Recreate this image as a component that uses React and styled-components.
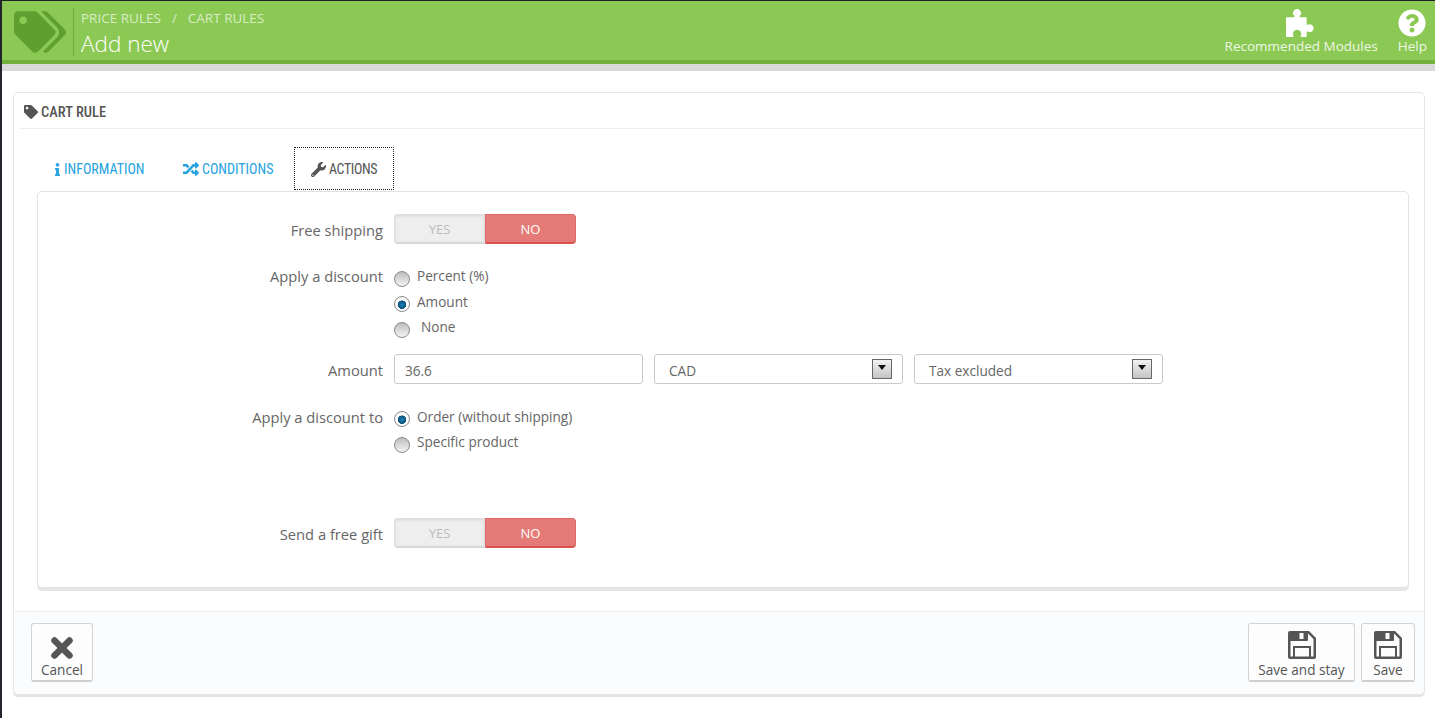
import styled, { createGlobalStyle } from 'styled-components';
import { FaTag, FaTags, FaInfo, FaRandom, FaWrench, FaQuestionCircle } from 'react-icons/fa';

const GlobalStyle = createGlobalStyle`
  html, body {
    margin: 0;
    padding: 0;
    background: #fff;
    font-family: "Open Sans", "Liberation Sans", sans-serif;
    font-size: 14px;
    color: #666;
  }
`;

const Shell = styled.div`
  display: flex;
  height: 718px;
  overflow: hidden;
`;

// restant de la barre latérale sombre
const SideStrip = styled.div`
  width: 2px;
  flex: none;
  background: #23252c;
`;

const Main = styled.div`
  flex: 1;
  min-width: 0;
  display: flex;
  flex-direction: column;
`;

const PageHead = styled.header`
  height: 59px;
  background: #8bc954;
  border-top: 1px solid #1c1e22;
  border-bottom: 4px solid #72b13c;
  box-shadow: 0 7px 0 #d9d9d9;
  display: flex;
  align-items: flex-start;
  justify-content: space-between;
  color: #fff;
`;

const HeadLeft = styled.div`
  display: flex;
  align-items: flex-start;
  padding: 7px 0 0 12px;
`;

const LogoBox = styled.div`
  width: 59px;
  height: 48px;
  border-right: 1px solid #6faa3d;
  display: flex;
  align-items: center;
  color: #5f9f30;
  font-size: 52px;
`;

const HeadTitles = styled.div`
  padding-left: 7px;
`;

const Crumbs = styled.div`
  display: flex;
  gap: 11px;
  font-size: 13.5px;
  line-height: 20px;
  color: #d8ecc6;
`;

const PageTitle = styled.h1`
  margin: 0;
  font-size: 22.5px;
  font-weight: 300;
  line-height: 32px;
  color: #fff;
`;

const HeadActions = styled.div`
  display: flex;
  gap: 20px;
  padding: 7px 8px 0 0;
`;

const HeadAction = styled.a`
  display: flex;
  flex-direction: column;
  align-items: center;
  font-size: 13.5px;
  line-height: 16px;
  color: #eef7e4;
`;

const HeadIcon = styled.span`
  height: 30px;
  display: flex;
  align-items: center;
  color: #fff;
  font-size: ${p => p.$size}px;
`;

const Panel = styled.section`
  margin: 28px 10px 0 11px;
  height: 603px;
  box-sizing: border-box;
  border: 1px solid #e6e6e6;
  border-radius: 5px;
  box-shadow: 0 2px 0 #e4e4e4;
  display: flex;
  flex-direction: column;
`;

const PanelHead = styled.div`
  margin: 0 0 0 5px;
  height: 32px;
  padding: 3px 0 0 5px;
  border-bottom: 1px solid #eee;
  display: flex;
  align-items: center;
  gap: 3px;
  font-family: "Roboto", sans-serif;
  font-stretch: condensed;
  font-size: 14.5px;
  font-weight: 500;
  color: #555;
`;

const Tabs = styled.nav`
  display: flex;
  align-items: flex-start;
  padding: 18px 0 0 23px;
  height: 44px;
`;

const Tab = styled.a`
  box-sizing: border-box;
  width: ${p => p.$width}px;
  height: 43px;
  padding: 1px 0 0 ${p => p.$pad}px;
  display: flex;
  align-items: center;
  gap: ${p => p.$gap}px;
  font-family: "Roboto", sans-serif;
  font-stretch: condensed;
  font-size: 14px;
  letter-spacing: ${p => (p.$active ? '-0.4px' : '0')};
  color: ${p => (p.$active ? '#555' : '#25a2e0')};
  background: ${p => (p.$active ? '#fff' : 'transparent')};
  border: ${p => (p.$active ? '1px dotted #222' : '1px solid transparent')};
`;

const FormPanel = styled.div`
  margin: 0 15px 0 23px;
  height: 397px;
  box-sizing: border-box;
  border: 1px solid #e2e2e2;
  border-radius: 5px;
  box-shadow: 0 3px 0 #e6e6e6;
  padding-top: 22px;
`;

const Row = styled.div`
  display: flex;
  gap: 11px;
  margin-top: ${p => p.$top || 0}px;
`;

const Label = styled.label`
  width: 345px;
  flex: none;
  text-align: right;
  font-size: 14.7px;
  color: #666;
  line-height: ${p => p.$line || 32}px;
  height: ${p => p.$line || 30}px;
`;

const Switch = styled.div`
  width: 182px;
  height: 30px;
  display: flex;
  font-size: 13px;
`;

const SwitchSide = styled.span`
  flex: 1;
  box-sizing: border-box;
  padding-top: 1px;
  display: flex;
  align-items: center;
  justify-content: center;
  border-radius: ${p => (p.$on ? '0 4px 4px 0' : '4px 0 0 4px')};
  color: ${p => (p.$on ? '#fff' : '#bbb')};
  background: ${p => (p.$on ? '#e57b78' : '#eeeeee')};
  border: 1px solid ${p => (p.$on ? '#dd6763' : '#e0e0e0')};
  border-bottom: 2px solid ${p => (p.$on ? '#d9534f' : '#d8d8d8')};
  box-shadow: ${p => (p.$on ? 'none' : 'inset 0 1px 3px rgba(0, 0, 0, 0.1)')};
`;

const RadioList = styled.div`
  display: flex;
  flex-direction: column;
  margin-top: -1px;
`;

const RadioRow = styled.div`
  display: flex;
  align-items: center;
  gap: ${p => p.$gap || 7}px;
  height: 25.5px;
  font-size: 13.6px;
  color: #666;
`;

const RadioDot = styled.span`
  box-sizing: border-box;
  width: 16px;
  height: 16px;
  margin-top: 6px;
  border-radius: 50%;
  border: 1px solid #8a8a8a;
  background: ${p =>
    p.$checked
      ? 'radial-gradient(circle at 50% 55%, #1a86b8 0, #0a4f78 4px, #fff 4.5px, #f4f4f4 100%)'
      : 'linear-gradient(#bdbdbd, #f4f4f4)'};
`;

const Controls = styled.div`
  display: flex;
  gap: 11px;
`;

const TextField = styled.div`
  box-sizing: border-box;
  width: 249px;
  height: 30px;
  padding: 4px 0 0 10px;
  border: 1px solid #c9c9c9;
  border-radius: 3px;
  display: flex;
  align-items: center;
  font-size: 13.6px;
  color: #666;
`;

const SelectBox = styled(TextField)`
  padding: 0 10px 0 14px;
  justify-content: space-between;
`;

const SelectValue = styled.span`
  padding-top: 4px;
`;

const SelectArrow = styled.span`
  box-sizing: border-box;
  width: 20px;
  height: 20px;
  border: 1px solid #666;
  background: linear-gradient(#f2f2f2, #c4c4c4);
  display: flex;
  justify-content: center;
  padding-top: 5px;

  &::after {
    content: '';
    width: 0;
    height: 0;
    border-left: 4.5px solid transparent;
    border-right: 4.5px solid transparent;
    border-top: 5px solid #111;
  }
`;

const PanelFooter = styled.footer`
  margin-top: 23px;
  flex: 1;
  border-top: 1px solid #eee;
  background: #fbfcfe;
  border-radius: 0 0 5px 5px;
  padding: 11px 9px 0 17px;
  display: flex;
  justify-content: space-between;
`;

const FooterGroup = styled.div`
  display: flex;
  gap: 6px;
`;

const FooterButton = styled.button`
  box-sizing: border-box;
  width: ${p => p.$width}px;
  height: 59px;
  padding: 0;
  background: #fdfdfd;
  border: 1px solid #d4d4d4;
  border-bottom: 2px solid #cfcfcf;
  border-radius: 3px;
  display: flex;
  flex-direction: column;
  align-items: center;
  justify-content: flex-end;
  font-family: inherit;
  font-size: 13.6px;
  line-height: 20px;
  color: #555;
`;

const ButtonIcon = styled.svg`
  display: block;
  flex: none;
  margin-bottom: 1px;
`;

function PuzzleIcon() {
  return (
    <svg width="31" height="28" viewBox="0 0 30 27" fill="#fff">
      <path d="M0 8H7.5C8.5 8 8.5 7 8 6.5A3.8 3.8 0 1 1 13.4 6.5C13 7 13 8 14 8H20V14.5C20 15.5 21 15.5 21.5 15A3.8 3.8 0 1 1 21.5 22C21 21.5 20 21.5 20 22.5V27H15C14 27 14 26 14.5 25.5A4 4 0 1 0 7 25.5C7.4 26 7.4 27 6.5 27H0Z" />
    </svg>
  );
}

function CancelIcon() {
  return (
    <ButtonIcon width="22" height="22" viewBox="0 0 22 22">
      <path d="M3.5 3.5 L18.5 18.5 M18.5 3.5 L3.5 18.5" stroke="#555" strokeWidth="6.5" strokeLinecap="round" fill="none" />
    </ButtonIcon>
  );
}

function SaveIcon() {
  return (
    <ButtonIcon width="28" height="28" viewBox="0 0 28 28">
      <path
        fillRule="evenodd"
        fill="#555"
        d="M2 0H21L28 7V26a2 2 0 0 1-2 2H2a2 2 0 0 1-2-2V2a2 2 0 0 1 2-2zM2.5 10V25.5H5V15H23V25.5H25.5V8L20 2.5V9a1 1 0 0 1-1 1zM7 17V25.5H21V17zM11.5 2V8H15.5V2z"
      />
    </ButtonIcon>
  );
}

function YesNo() {
  return (
    <Switch>
      <SwitchSide>YES</SwitchSide>
      <SwitchSide $on>NO</SwitchSide>
    </Switch>
  );
}

function Radio({ checked, gap, children }) {
  return (
    <RadioRow $gap={gap}>
      <RadioDot $checked={checked} />
      {children}
    </RadioRow>
  );
}

function SelectField({ value }) {
  return (
    <SelectBox>
      <SelectValue>{value}</SelectValue>
      <SelectArrow />
    </SelectBox>
  );
}

export default function App() {
  return (
    <Shell>
      <GlobalStyle />
      <SideStrip />
      <Main>
        <PageHead>
          <HeadLeft>
            <LogoBox>
              <FaTags />
            </LogoBox>
            <HeadTitles>
              <Crumbs>
                <span>PRICE RULES</span>
                <span>/</span>
                <span>CART RULES</span>
              </Crumbs>
              <PageTitle>Add new</PageTitle>
            </HeadTitles>
          </HeadLeft>
          <HeadActions>
            <HeadAction>
              <HeadIcon $size={28}><PuzzleIcon /></HeadIcon>
              Recommended Modules
            </HeadAction>
            <HeadAction>
              <HeadIcon $size={28}><FaQuestionCircle /></HeadIcon>
              Help
            </HeadAction>
          </HeadActions>
        </PageHead>

        <Panel>
          <PanelHead>
            <FaTag size={14} />
            CART RULE
          </PanelHead>

          <Tabs>
            <Tab $width={123} $pad={13} $gap={0}>
              <FaInfo size={13} />
              INFORMATION
            </Tab>
            <Tab $width={134} $pad={22} $gap={3}>
              <FaRandom size={16} />
              CONDITIONS
            </Tab>
            <Tab $width={100} $pad={16} $gap={3} $active>
              <FaWrench size={15} />
              ACTIONS
            </Tab>
          </Tabs>

          <FormPanel>
            <Row>
              <Label>Free shipping</Label>
              <YesNo />
            </Row>
            <Row $top={20}>
              <Label $line={25}>Apply a discount</Label>
              <RadioList>
                <Radio>Percent (%)</Radio>
                <Radio checked>Amount</Radio>
                <Radio gap={11}>None</Radio>
              </RadioList>
            </Row>
            <Row $top={14}>
              <Label>Amount</Label>
              <Controls>
                <TextField>36.6</TextField>
                <SelectField value="CAD" />
                <SelectField value="Tax excluded" />
              </Controls>
            </Row>
            <Row $top={21}>
              <Label $line={25}>Apply a discount to</Label>
              <RadioList>
                <Radio checked>Order (without shipping)</Radio>
                <Radio>Specific product</Radio>
              </RadioList>
            </Row>
            <Row $top={63}>
              <Label>Send a free gift</Label>
              <YesNo />
            </Row>
          </FormPanel>

          <PanelFooter>
            <FooterButton $width={62}>
              <CancelIcon />
              Cancel
            </FooterButton>
            <FooterGroup>
              <FooterButton $width={107}>
                <SaveIcon />
                Save and stay
              </FooterButton>
              <FooterButton $width={54}>
                <SaveIcon />
                Save
              </FooterButton>
            </FooterGroup>
          </PanelFooter>
        </Panel>
      </Main>
    </Shell>
  );
}
